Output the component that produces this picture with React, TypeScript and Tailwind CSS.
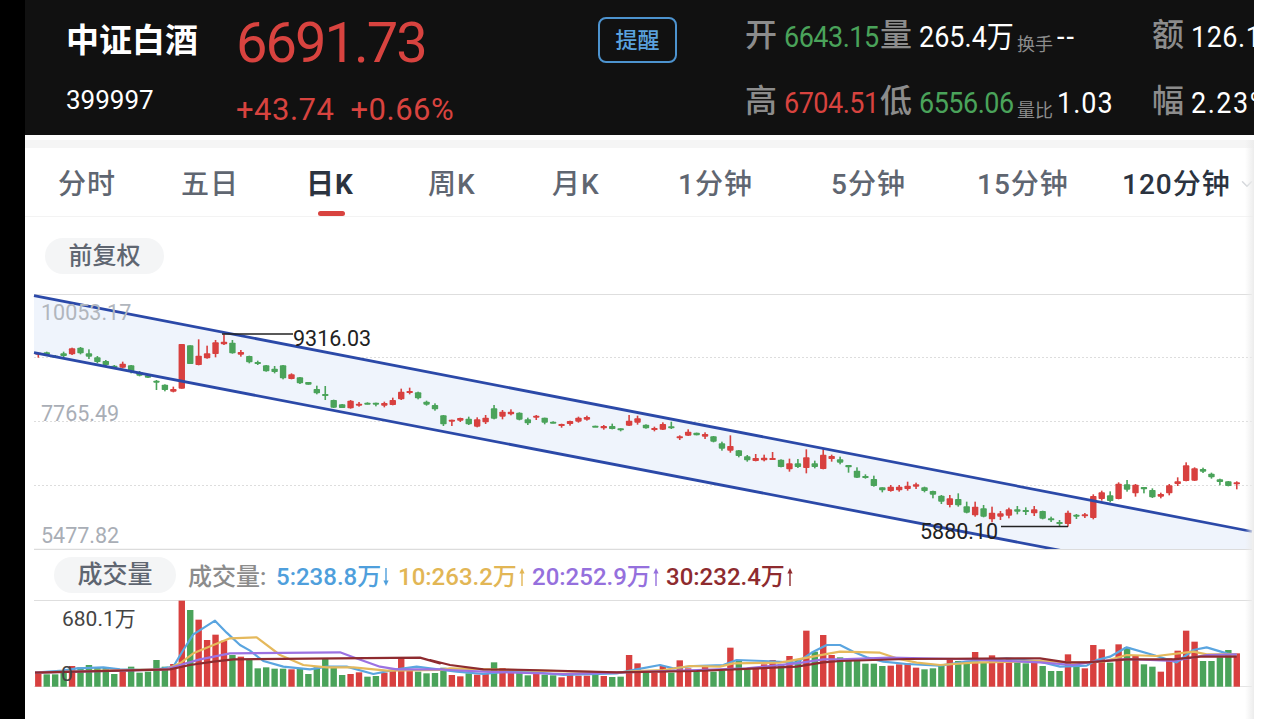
import { ChevronDown } from "lucide-react";

const RED = "#d8403f";
const GREEN = "#4aa35a";
const STEP = 8.44;
const START_X = 38.3;

const reds = new Set([
  0, 4, 10, 16, 17, 19, 20, 21, 22, 24, 30, 37, 38, 41, 42, 43, 44, 49, 50, 52, 53, 55, 56, 59, 62, 63, 64, 65, 67, 70,
  71, 73, 74, 76, 77, 79, 82, 85, 86, 87, 89, 91, 93, 94, 101, 102, 103, 104, 108, 111, 113, 114, 115, 118, 122, 124,
  125, 126, 128, 130, 133, 134, 135, 136, 137, 142,
]);

// wick top, body top, body bottom, wick bottom, measured at 3x from a section origin
type Candle = [number, number, number, number];

const candlesA: Candle[] = [
  [203, 203, 207, 218], [200, 202, 209, 211], [210, 212, 216, 218], [200, 205, 213, 216], [188, 190, 208, 210],
  [186, 188, 205, 208], [193, 205, 215, 222], [213, 217, 231, 235], [225, 228, 240, 243], [240, 242, 248, 250],
  [230, 236, 248, 250], [240, 241, 260, 265], [258, 262, 272, 274], [270, 271, 278, 279], [285, 287, 292, 315],
  [298, 299, 315, 319], [305, 312, 320, 322], [177, 177, 311, 311], [181, 181, 237, 237], [163, 212, 240, 241],
  [182, 205, 220, 221], [165, 172, 207, 217], [148, 170, 178, 180], [165, 173, 205, 206], [195, 201, 209, 215],
  [212, 213, 232, 235], [227, 231, 235, 240], [240, 241, 259, 260], [243, 251, 261, 265], [240, 241, 280, 283],
  [265, 268, 282, 283], [276, 277, 295, 297], [291, 291, 299, 299], [302, 312, 325, 328], [303, 327, 330, 345],
  [344, 345, 368, 369], [357, 358, 369, 369], [345, 347, 370, 371], [351, 356, 362, 365], [352, 353, 357, 358],
  [353, 353, 357, 364], [350, 354, 362, 367], [338, 345, 360, 361], [311, 320, 343, 345], [308, 318, 323, 328],
  [320, 322, 340, 343],
];

const candlesB: Candle[] = [
  [62, 65, 74, 77], [70, 75, 88, 92], [105, 106, 133, 138], [119, 119, 123, 138], [113, 114, 122, 126],
  [110, 116, 133, 135], [112, 118, 140, 142], [105, 113, 127, 132], [75, 85, 116, 118], [90, 95, 110, 118],
  [88, 95, 103, 106], [97, 98, 119, 121], [113, 118, 130, 135], [105, 107, 113, 120], [113, 113, 128, 133],
  [124, 125, 129, 130], [131, 132, 137, 143], [122, 123, 132, 137], [110, 113, 125, 128], [107, 111, 119, 122],
  [137, 137, 141, 141], [135, 138, 145, 149], [131, 138, 147, 148], [145, 145, 150, 154], [105, 122, 137, 138],
  [107, 115, 128, 134], [133, 134, 145, 146], [140, 144, 150, 154], [127, 132, 149, 150], [125, 139, 144, 147],
  [166, 169, 175, 180], [148, 155, 167, 168], [158, 158, 166, 166], [157, 162, 170, 177], [168, 169, 185, 187],
  [185, 190, 206, 212], [166, 198, 212, 218], [210, 211, 228, 232], [225, 229, 241, 245], [222, 234, 243, 244],
  [224, 233, 241, 244], [216, 234, 238, 240], [238, 239, 261, 262], [236, 250, 268, 275], [237, 250, 261, 264],
  [208, 232, 264, 280], [242, 250, 261, 265], [206, 224, 267, 268], [224, 228, 237, 245],
];

const candlesC: Candle[] = [
  [80, 88, 98, 103], [105, 105, 112, 128], [112, 122, 143, 144], [133, 138, 142, 146], [137, 147, 168, 170],
  [172, 172, 181, 187], [165, 170, 183, 185], [165, 170, 181, 185], [155, 167, 177, 182], [158, 163, 170, 177],
  [170, 172, 183, 187], [182, 183, 194, 205], [195, 197, 215, 222], [195, 205, 225, 232], [190, 207, 226, 230],
  [215, 229, 248, 250], [215, 230, 256, 260], [225, 235, 260, 262], [230, 248, 268, 277], [243, 250, 260, 270],
  [233, 238, 257, 265], [228, 238, 245, 253], [232, 240, 245, 255], [228, 238, 250, 258], [242, 243, 266, 268],
  [260, 265, 269, 276], [270, 276, 282, 290], [242, 248, 282, 290], [252, 254, 260, 267], [249, 253, 259, 264],
  [193, 198, 264, 268], [182, 187, 207, 212], [184, 196, 213, 217], [157, 161, 207, 208], [150, 163, 179, 185],
  [162, 164, 190, 200], [171, 171, 178, 190], [175, 180, 202, 204], [188, 192, 200, 205], [162, 166, 190, 196],
  [142, 154, 162, 168], [97, 106, 153, 154], [112, 115, 152, 153], [113, 117, 125, 129], [128, 131, 142, 146],
  [146, 148, 156, 166], [153, 154, 168, 169], [154, 157, 162, 178],
];

const toCandles = (rows: Candle[], base: number) =>
  rows.map((row) => row.map((v) => base + v / 3) as Candle);

const candles = [...toCandles(candlesA, 285), ...toCandles(candlesB, 380), ...toCandles(candlesC, 430)];

const volumesA = [
  367, 373, 373, 367, 348, 352, 345, 352, 352, 372, 365, 350, 368, 365, 330, 350, 342, 152, 180, 209, 270, 254, 272,
  315, 320, 330, 355, 352, 356, 356, 358, 356, 372, 352, 325, 352, 375, 372, 367, 380, 378, 368, 362, 323, 362, 365,
  370,
];
const volumesB = [
  219, 203, 225, 229, 220, 224, 222, 187, 204, 215, 219, 226, 221, 224, 226, 232, 224, 227, 227, 224, 228, 231, 230,
  165, 190, 217, 218, 198, 218, 181, 205, 215, 200, 215, 212, 143, 180, 208, 205, 193, 180, 192, 168, 178, 92, 155,
  105, 165,
];
const volumesC = [
  172, 182, 182, 191, 191, 198, 197, 193, 190, 203, 208, 205, 195, 178, 183, 190, 156, 187, 166, 180, 175, 187, 190,
  188, 198, 213, 213, 163, 195, 205, 135, 148, 188, 133, 142, 168, 193, 200, 215, 175, 152, 92, 125, 183, 183, 172,
  150, 160,
];

const volumes = [...volumesA.map((v) => 550 + v / 3), ...volumesB.map((v) => 600 + v / 3), ...volumesC.map((v) => 600 + v / 3)];

// moving averages, same 3x measuring, one list for each of the three crops
type Pt = [number, number];
const line = (a: Pt[], b: Pt[], c: Pt[]) =>
  [
    ...a.map(([x, y]) => `${20 + x / 3},${550 + y / 3}`),
    ...b.map(([x, y]) => `${430 + x / 3},${600 + y / 3}`),
    ...c.map(([x, y]) => `${840 + x / 3},${600 + y / 3}`),
  ].join(" ");

const maLines = [
  {
    color: "#5aa5e0",
    points: line(
      [[45, 368], [130, 362], [170, 355], [250, 352], [300, 358], [400, 360], [460, 350], [490, 300], [520, 253], [585, 212], [620, 248], [660, 285], [690, 302], [730, 333], [790, 350], [870, 358], [920, 350], [980, 350], [1060, 372], [1130, 358], [1190, 350]],
      [[0, 205], [80, 215], [160, 222], [260, 212], [400, 225], [560, 220], [620, 208], [690, 195], [730, 205], [790, 198], [880, 195], [920, 180], [1000, 183], [1100, 188], [1150, 155], [1190, 135], [1230, 135]],
      [[0, 135], [40, 155], [80, 172], [130, 185], [200, 192], [300, 197], [380, 185], [500, 175], [600, 185], [660, 200], [740, 197], [770, 180], [810, 170], [860, 142], [940, 165], [1010, 187], [1060, 150], [1100, 142], [1160, 160], [1190, 165]],
    ),
  },
  {
    color: "#e5b95c",
    points: line(
      [[45, 368], [300, 360], [440, 358], [480, 340], [520, 310], [580, 285], [630, 265], [710, 262], [780, 315], [850, 345], [920, 352], [1000, 352], [1100, 362], [1260, 360]],
      [[60, 205], [560, 218], [620, 213], [700, 210], [780, 198], [870, 200], [910, 190], [1050, 188], [1120, 175], [1200, 160]],
      [[0, 155], [120, 158], [170, 175], [230, 188], [300, 195], [400, 188], [600, 183], [700, 188], [790, 185], [860, 165], [950, 168], [1060, 155], [1100, 163], [1190, 163]],
    ),
  },
  {
    color: "#9b72e2",
    points: line(
      [[45, 368], [300, 362], [440, 358], [480, 345], [540, 328], [630, 310], [960, 307], [1000, 322], [1080, 350], [1130, 358], [1260, 358]],
      [[60, 210], [160, 215], [400, 222], [560, 218], [800, 210], [950, 205], [1100, 190], [1180, 178]],
      [[0, 178], [150, 173], [350, 177], [600, 187], [700, 195], [760, 185], [860, 177], [1000, 183], [1100, 165], [1190, 163]],
    ),
  },
  {
    color: "#8e2b2f",
    points: line(
      [[45, 368], [300, 362], [450, 358], [510, 345], [580, 335], [640, 328], [1200, 323], [1260, 340]],
      [[0, 180], [60, 195], [160, 208], [300, 210], [560, 217], [800, 213], [1100, 200], [1180, 187]],
      [[0, 183], [200, 177], [600, 175], [680, 187], [740, 187], [860, 178], [1000, 178], [1080, 170], [1190, 170]],
    ),
  },
];

const tabs = [
  { label: "分时", width: "w-[123px]" },
  { label: "五日", width: "w-[125px]" },
  { label: "日K", width: "w-[122px]", active: true },
  { label: "周K", width: "w-[124px]" },
  { label: "月K", width: "w-[126px]" },
  { label: "1分钟", width: "w-[153px]" },
  { label: "5分钟", width: "w-[146px]" },
  { label: "15分钟", width: "w-[145px]" },
  { label: "120分钟", width: "w-[112px]", dark: true },
];

const Label = ({ children }: { children: string }) => (
  <span className="text-[32px] leading-none font-medium text-[#8c8c8c]">{children}</span>
);

const Value = ({ children, className }: { children: React.ReactNode; className: string }) => (
  <span className={`mt-[4px] inline-block origin-center scale-y-110 text-[27px] leading-none tracking-[-0.5px] ${className}`}>
    {children}
  </span>
);

const Small = ({ children }: { children: string }) => (
  <span className="mt-[20px] text-[18px] leading-none text-[#8c8c8c]">{children}</span>
);

const Arrow = ({ color, down }: { color: string; down?: boolean }) => (
  <svg width="8" height="20" viewBox="0 0 8 20" className={down ? "rotate-180" : ""}>
    <path d="M4 19V3" stroke={color} strokeWidth="1.4" />
    <path d="M4 1L6.6 6.5H1.4Z" fill={color} />
  </svg>
);

const Ma = ({ text, color, down, className }: { text: string; color: string; down?: boolean; className: string }) => (
  <span className={`flex items-center ${className}`}>
    <span style={{ color }}>{text}</span>
    <span className="ml-[1px]">
      <Arrow color={color} down={down} />
    </span>
  </span>
);

export default function App() {
  return (
    <div className="flex h-[719px] w-[1280px] overflow-hidden bg-white [font-family:Roboto,'Noto_Sans_CJK_SC',sans-serif]">
      <div className="w-[25px] shrink-0 bg-black" />

      <main className="relative w-[1229px] shrink-0">
        {/* quote header */}
        <header className="flex h-[135px] overflow-hidden bg-[#111111] pl-[41px]">
          <div className="w-[170px] shrink-0">
            <div className="mt-[17px] text-[33px] leading-[48px] font-bold whitespace-nowrap text-white">中证白酒</div>
            <div className="mt-[20px] text-[26px] leading-[30px] text-white">399997</div>
          </div>
          <div className="w-[362px] shrink-0 text-[#d8433f]">
            <div className="mt-[10px] text-[56px] leading-[66px] tracking-[-2px]">6691.73</div>
            <div className="mt-[16px] flex gap-[16px] text-[31px] leading-[36px] tracking-[0.5px]">
              <span>+43.74</span>
              <span>+0.66%</span>
            </div>
          </div>
          <button className="mt-[17px] h-[46px] w-[79px] shrink-0 rounded-[8px] border-2 border-[#4d93cf] text-[22px] font-medium text-[#5aa2de]">
            提醒
          </button>
          <div className="ml-[68px] grid shrink-0 auto-rows-[66px] grid-cols-[39px_96px_39px_98px_40px_95px_39px_100px] items-center pt-[2px] whitespace-nowrap">
            <Label>开</Label>
            <Value className="text-[#4aa35a]">6643.15</Value>
            <Label>量</Label>
            <Value className="tracking-[0px] text-white">265.4万</Value>
            <Small>换手</Small>
            <Value className="tracking-[2px] text-white">--</Value>
            <Label>额</Label>
            <Value className="tracking-[0.5px] text-white">126.1</Value>
            <Label>高</Label>
            <Value className="text-[#d8433f]">6704.51</Value>
            <Label>低</Label>
            <Value className="text-[#4aa35a]">6556.06</Value>
            <Small>量比</Small>
            <Value className="tracking-[1px] text-white">1.03</Value>
            <Label>幅</Label>
            <Value className="tracking-[1.5px] text-white">2.23%</Value>
          </div>
        </header>

        <div className="h-[5px] bg-white" />
        <div className="h-[8px] bg-[#f5f5f5]" />

        {/* period tabs */}
        <nav className="flex h-[69px] border-b border-[#f3f3f3] pl-[33px] whitespace-nowrap">
          {tabs.map((tab) => (
            <div
              key={tab.label}
              className={`relative flex h-[68px] shrink-0 items-center pt-[6px] text-[28px] tracking-[1px] ${tab.width} ${
                tab.active ? "font-bold text-[#2b333f]" : tab.dark ? "font-medium text-[#2b333f]" : "font-medium text-[#5f6671]"
              }`}
            >
              {tab.label}
              {tab.active && <span className="absolute top-[63px] left-[12px] h-[5px] w-[27px] rounded-full bg-[#d8433f]" />}
            </div>
          ))}
          <ChevronDown className="mt-[27px] ml-[4px] shrink-0 text-[#d5d8dc]" size={18} />
        </nav>

        <div className="h-[77px] pt-[21px] pl-[20px]">
          <span className="flex h-[36px] w-[119px] items-center justify-center rounded-full bg-[#f4f5f6] text-[24px] font-medium text-[#5f6671]">
            前复权
          </span>
        </div>

        {/* candles */}
        <div className="relative h-[256px] text-[21.5px] leading-none">
          <svg width="1229" height="256" viewBox="25 294 1229 256" className="block">
            <defs>
              <clipPath id="kline-clip">
                <rect x="25" y="294" width="1229" height="255" />
              </clipPath>
            </defs>
            <path d="M34 294.5H1252" stroke="#dedede" />
            <path d="M34 357.5H1252M34 421.5H1252M34 485.5H1252" stroke="#dddddd" strokeDasharray="2 2" />
            <path d="M34 549.5H1252" stroke="#dcdcdc" strokeWidth="1.5" />
            <g clipPath="url(#kline-clip)">
              <polygon points="34,295.7 1252,531.5 1252,549 1058,549 34,352.7" fill="#eff4fc" />
            </g>
            {candles.map(([wickTop, bodyTop, bodyBottom, wickBottom], i) => {
              const x = START_X + STEP * i;
              const color = reds.has(i) ? RED : GREEN;
              return (
                <g key={i} fill={color}>
                  <rect x={x - 0.8} y={wickTop} width="1.6" height={wickBottom - wickTop} />
                  <rect x={x - 3.2} y={bodyTop} width="6.4" height={Math.max(bodyBottom - bodyTop, 2)} rx="0.8" />
                </g>
              );
            })}
            <g clipPath="url(#kline-clip)" stroke="#2b49a8" strokeWidth="2.8">
              <line x1="34" y1="295.7" x2="1252" y2="531.5" />
              <line x1="34" y1="352.7" x2="1100" y2="558" />
            </g>
            <path d="M222 334H293" stroke="#222222" strokeWidth="1.5" />
            <path d="M1001 526.5H1068" stroke="#222222" strokeWidth="1.5" />
          </svg>
          <span className="absolute top-[8px] left-[16px] text-[#b1b6bd]">10053.17</span>
          <span className="absolute top-[109px] left-[16px] text-[#a9aeb6]">7765.49</span>
          <span className="absolute top-[231px] left-[16px] text-[#a9aeb6]">5477.82</span>
          <span className="absolute top-[34px] left-[268px] text-[#222222]">9316.03</span>
          <span className="absolute top-[227px] left-[895px] text-[#222222]">5880.10</span>
        </div>

        {/* volume legend */}
        <div className="flex h-[50px] items-center pl-[29px] text-[24px] font-medium whitespace-nowrap">
          <span className="flex h-[36px] w-[122px] items-center justify-center rounded-full bg-[#f4f5f6] text-[25px] text-[#5f6671]">
            成交量
          </span>
          <span className="ml-[12px] w-[88px] pt-[3px] text-[#8c8c8c]">成交量:</span>
          <Ma className="w-[122px] pt-[3px]" text="5:238.8万" color="#4f9fdc" down />
          <Ma className="w-[134px] pt-[3px]" text="10:263.2万" color="#e2b655" />
          <Ma className="w-[134px] pt-[3px]" text="20:252.9万" color="#9570dd" />
          <Ma className="w-[130px] pt-[3px]" text="30:232.4万" color="#8e2b2f" />
        </div>

        {/* volume bars */}
        <div className="relative h-[119px]">
          <svg width="1229" height="119" viewBox="25 600 1229 119" className="block">
            <path d="M34 600.5H1252" stroke="#dedede" />
            <path d="M34 686.5H1252" stroke="#e4e4e4" />
            {volumes.map((top, i) => (
              <rect
                key={i}
                x={START_X + STEP * i - 3.2}
                y={top}
                width="6.4"
                height={686.7 - top}
                fill={reds.has(i) ? RED : GREEN}
              />
            ))}
            {maLines.map((ma) => (
              <polyline
                key={ma.color}
                points={ma.points}
                fill="none"
                stroke={ma.color}
                strokeWidth="2.2"
                strokeLinejoin="round"
              />
            ))}
          </svg>
          <span className="absolute top-[7px] left-[37px] text-[21px] leading-[24px] text-[#444444]">680.1万</span>
          <span className="absolute top-[62px] left-[36px] text-[21px] leading-[24px] text-[#444444]">0</span>
        </div>

        {/* soft edge next to the white margin */}
        <div className="absolute top-[140px] right-0 bottom-0 w-[9px] bg-gradient-to-r from-transparent to-[#ececec]" />
      </main>

      <div className="flex-1 bg-white" />
    </div>
  );
}
